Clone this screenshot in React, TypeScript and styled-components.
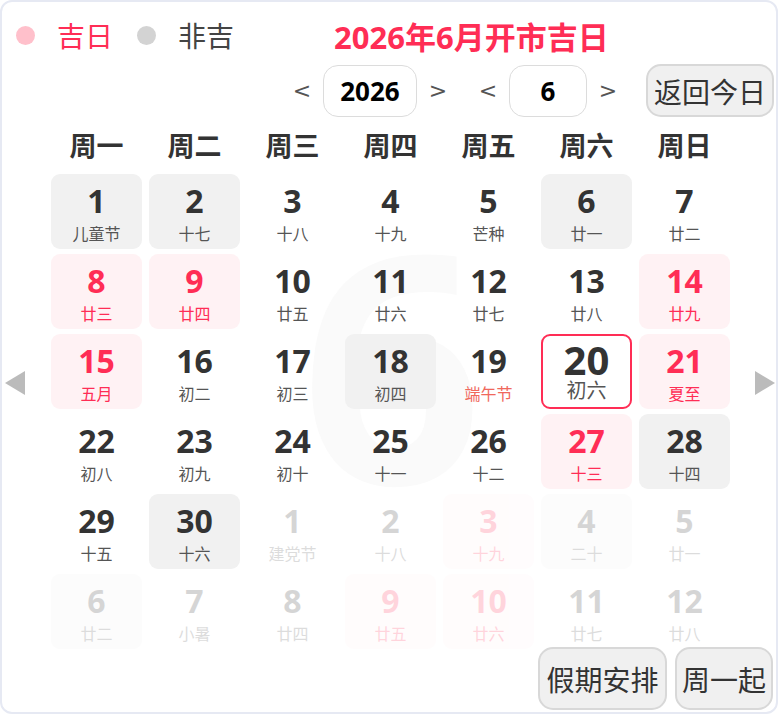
import React from "react";
import styled, { createGlobalStyle, css } from "styled-components";

const GlobalStyle = createGlobalStyle`
  html, body {
    margin: 0;
    padding: 0;
    background: #ffffff;
  }
  body {
    font-family: "Noto Sans", "Noto Sans CJK SC", sans-serif;
  }
`;

const RED = "#ff2d55";

type Kind = "plain" | "grey" | "pink" | "today";

interface DayItem {
  day: number;
  lunar: string;
  kind?: Kind;
  other?: boolean;
  festival?: boolean;
}

const days: DayItem[] = [
  { day: 1, lunar: "儿童节", kind: "grey" },
  { day: 2, lunar: "十七", kind: "grey" },
  { day: 3, lunar: "十八" },
  { day: 4, lunar: "十九" },
  { day: 5, lunar: "芒种" },
  { day: 6, lunar: "廿一", kind: "grey" },
  { day: 7, lunar: "廿二" },
  { day: 8, lunar: "廿三", kind: "pink" },
  { day: 9, lunar: "廿四", kind: "pink" },
  { day: 10, lunar: "廿五" },
  { day: 11, lunar: "廿六" },
  { day: 12, lunar: "廿七" },
  { day: 13, lunar: "廿八" },
  { day: 14, lunar: "廿九", kind: "pink" },
  { day: 15, lunar: "五月", kind: "pink" },
  { day: 16, lunar: "初二" },
  { day: 17, lunar: "初三" },
  { day: 18, lunar: "初四", kind: "grey" },
  { day: 19, lunar: "端午节", festival: true },
  { day: 20, lunar: "初六", kind: "today" },
  { day: 21, lunar: "夏至", kind: "pink" },
  { day: 22, lunar: "初八" },
  { day: 23, lunar: "初九" },
  { day: 24, lunar: "初十" },
  { day: 25, lunar: "十一" },
  { day: 26, lunar: "十二" },
  { day: 27, lunar: "十三", kind: "pink" },
  { day: 28, lunar: "十四", kind: "grey" },
  { day: 29, lunar: "十五" },
  { day: 30, lunar: "十六", kind: "grey" },
  { day: 1, lunar: "建党节", other: true },
  { day: 2, lunar: "十八", other: true },
  { day: 3, lunar: "十九", kind: "pink", other: true },
  { day: 4, lunar: "二十", kind: "grey", other: true },
  { day: 5, lunar: "廿一", other: true },
  { day: 6, lunar: "廿二", kind: "grey", other: true },
  { day: 7, lunar: "小暑", other: true },
  { day: 8, lunar: "廿四", other: true },
  { day: 9, lunar: "廿五", kind: "pink", other: true },
  { day: 10, lunar: "廿六", kind: "pink", other: true },
  { day: 11, lunar: "廿七", other: true },
  { day: 12, lunar: "廿八", other: true },
];

const weekdays = ["周一", "周二", "周三", "周四", "周五", "周六", "周日"];

const Card = styled.div`
  position: relative;
  box-sizing: border-box;
  width: 778px;
  height: 714px;
  border: 2px solid #e6e9f3;
  border-radius: 12px;
  padding-top: 12px;
  overflow: hidden;
  background: #fff;
`;

// 배경에 깔리는 큰 월 숫자
const Watermark = styled.div`
  position: absolute;
  left: 0;
  right: 0;
  top: 200px;
  text-align: center;
  font-size: 318px;
  line-height: 1;
  font-weight: 700;
  color: #fafafa;
  padding-left: 6px;
  pointer-events: none;
  user-select: none;
  z-index: 0;
`;

const Content = styled.div`
  position: relative;
  z-index: 1;
  display: flex;
  flex-direction: column;
`;

const LegendRow = styled.div`
  display: flex;
  align-items: center;
  height: 42px;
  padding-left: 14px;
`;

const Dot = styled.span<{ $color: string }>`
  width: 19px;
  height: 19px;
  border-radius: 50%;
  background: ${(p) => p.$color};
  margin-right: 22px;
`;

const LegendText = styled.span<{ $color: string }>`
  font-family: "Noto Sans CJK SC", sans-serif;
  font-size: 28px;
  color: ${(p) => p.$color};
  margin-right: 24px;
`;

const Title = styled.h1`
  margin: 0 0 0 76px;
  font-family: "Noto Sans", "Noto Sans CJK SC", sans-serif;
  font-size: 31px;
  font-weight: 700;
  color: ${RED};
`;

const ToolRow = styled.div`
  display: flex;
  justify-content: flex-end;
  align-items: center;
  margin-top: 8px;
  padding-right: 2px;
  height: 53px;
`;

const Stepper = styled.div`
  display: flex;
  align-items: center;
  gap: 14px;
  margin-right: 36px;

  &:last-of-type {
    margin-right: 31px;
  }
`;

const StepArrow = styled.span`
  width: 14px;
  display: flex;
  justify-content: center;
  font-family: "DejaVu Sans", sans-serif;
  font-size: 22px;
  color: #555;
`;

const ValueBox = styled.div<{ $width: number }>`
  box-sizing: border-box;
  width: ${(p) => p.$width}px;
  height: 52px;
  border: 1px solid #dcdcdc;
  border-radius: 15px;
  display: flex;
  align-items: center;
  justify-content: center;
  font-size: 26px;
  font-weight: 700;
  color: #000;
`;

const GreyButton = styled.button<{ $width: number; $height: number }>`
  box-sizing: border-box;
  width: ${(p) => p.$width}px;
  height: ${(p) => p.$height}px;
  padding: 0;
  border: 2px solid #d8d8d8;
  border-radius: 15px;
  background: #f0f0f0;
  font-family: "Noto Sans CJK SC", sans-serif;
  font-size: 28px;
  color: #333;
  display: flex;
  align-items: center;
  justify-content: center;
`;

const Body = styled.div`
  display: flex;
  align-items: center;
  margin-top: 12px;
`;

const Side = styled.div<{ $right?: boolean }>`
  display: flex;
  ${(p) =>
    p.$right
      ? css`
          flex: 1;
          justify-content: flex-end;
          padding: 0 1px 12px 0;
        `
      : css`
          width: 49px;
          justify-content: flex-start;
          padding: 0 0 12px 3px;
          box-sizing: border-box;
        `}
`;

const Triangle = styled.span<{ $right?: boolean }>`
  width: 0;
  height: 0;
  border-top: 12px solid transparent;
  border-bottom: 12px solid transparent;
  ${(p) =>
    p.$right
      ? css`
          border-left: 20px solid #bbbbbb;
        `
      : css`
          border-right: 20px solid #bbbbbb;
        `}
`;

const Calendar = styled.div`
  width: 679px;
  display: flex;
  flex-direction: column;
`;

const WeekHeader = styled.div`
  display: grid;
  grid-template-columns: repeat(7, 91px);
  column-gap: 7px;
  height: 34px;
  margin-bottom: 11px;
`;

const WeekName = styled.div`
  text-align: center;
  font-family: "Noto Sans CJK SC", sans-serif;
  font-size: 27px;
  line-height: 32px;
  font-weight: 700;
  color: #333;
`;

const Grid = styled.div`
  display: grid;
  grid-template-columns: repeat(7, 91px);
  grid-auto-rows: 75px;
  gap: 5px 7px;
`;

const Cell = styled.div<{ $kind: Kind; $other?: boolean }>`
  box-sizing: border-box;
  border-radius: 9px;
  display: flex;
  flex-direction: column;
  align-items: center;
  padding-top: 9px;
  opacity: ${(p) => (p.$other ? 0.2 : 1)};
  background: ${(p) =>
    p.$kind === "grey" ? "#f1f1f1" : p.$kind === "pink" ? "#fff2f4" : "transparent"};
  ${(p) =>
    p.$kind === "today" &&
    css`
      background: #fff;
      border: 2px solid ${RED};
      padding-top: 4px;
    `}
`;

const DayNum = styled.div<{ $kind: Kind }>`
  font-size: ${(p) => (p.$kind === "today" ? 40 : 32)}px;
  line-height: ${(p) => (p.$kind === "today" ? 40 : 36)}px;
  font-weight: 700;
  color: ${(p) => (p.$kind === "pink" ? RED : "#333")};
`;

const Lunar = styled.div<{ $kind: Kind; $festival?: boolean }>`
  margin-top: ${(p) => (p.$kind === "today" ? -2 : 4)}px;
  font-family: "Noto Sans CJK SC", sans-serif;
  font-size: ${(p) => (p.$kind === "today" ? 20 : 16)}px;
  line-height: ${(p) => (p.$kind === "today" ? 24 : 20)}px;
  color: ${(p) => (p.$kind === "pink" ? RED : p.$festival ? "#f0685c" : "#555")};
`;

const FootRow = styled.div`
  display: flex;
  justify-content: flex-end;
  gap: 8px;
  margin-top: -2px;
  padding-right: 3px;
`;

export default function App() {
  return (
    <>
      <GlobalStyle />
      <Card>
        <Watermark aria-hidden="true">6</Watermark>
        <Content>
          <LegendRow>
            <Dot $color="#ffc0cb" />
            <LegendText $color={RED}>吉日</LegendText>
            <Dot $color="#d3d3d3" />
            <LegendText $color="#444">非吉</LegendText>
            <Title>2026年6月开市吉日</Title>
          </LegendRow>

          <ToolRow>
            <Stepper>
              <StepArrow>&lt;</StepArrow>
              <ValueBox $width={94}>2026</ValueBox>
              <StepArrow>&gt;</StepArrow>
            </Stepper>
            <Stepper>
              <StepArrow>&lt;</StepArrow>
              <ValueBox $width={78}>6</ValueBox>
              <StepArrow>&gt;</StepArrow>
            </Stepper>
            <GreyButton $width={128} $height={53}>返回今日</GreyButton>
          </ToolRow>

          <Body>
            <Side>
              <Triangle />
            </Side>
            <Calendar>
              <WeekHeader>
                {weekdays.map((w) => (
                  <WeekName key={w}>{w}</WeekName>
                ))}
              </WeekHeader>
              <Grid>
                {days.map((d, i) => {
                  const kind = d.kind ?? "plain";
                  return (
                    <Cell key={i} $kind={kind} $other={d.other}>
                      <DayNum $kind={kind}>{d.day}</DayNum>
                      <Lunar $kind={kind} $festival={d.festival}>
                        {d.lunar}
                      </Lunar>
                    </Cell>
                  );
                })}
              </Grid>
            </Calendar>
            <Side $right>
              <Triangle $right />
            </Side>
          </Body>

          <FootRow>
            <GreyButton $width={129} $height={63}>假期安排</GreyButton>
            <GreyButton $width={98} $height={63}>周一起</GreyButton>
          </FootRow>
        </Content>
      </Card>
    </>
  );
}
